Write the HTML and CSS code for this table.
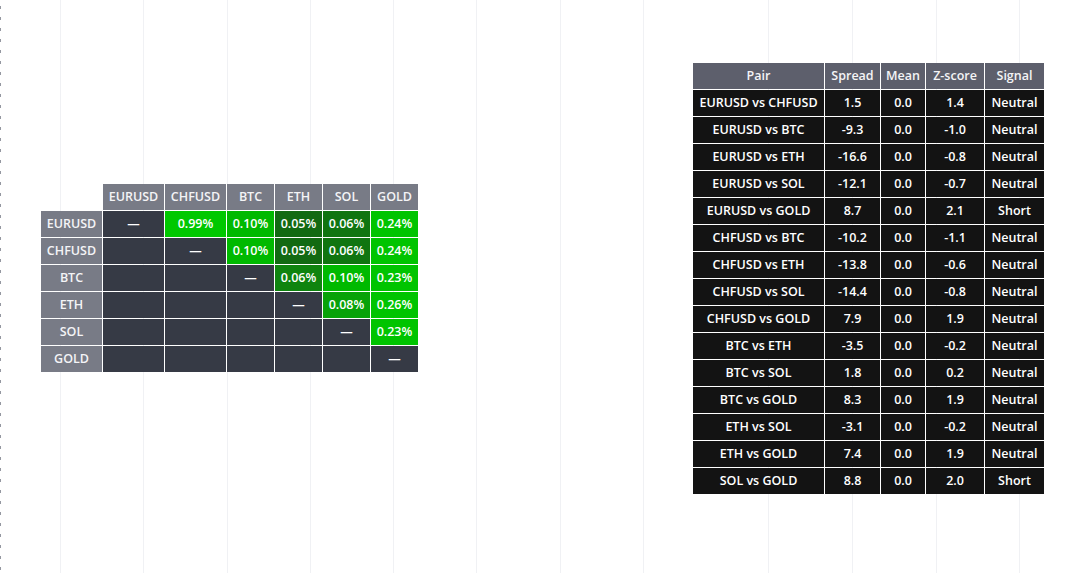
FILE: index.html
```html
<!DOCTYPE html>
<html>
<head>
<meta charset="utf-8">
<link rel="stylesheet" href="styles.css">
</head>
<body>
<div class="chart">
  <table class="corr">
    <colgroup>
      <col class="w61"><col class="w61"><col class="w61"><col class="w47"><col class="w47"><col class="w47"><col class="w47">
    </colgroup>
    <tr><td class="blank"></td><th>EURUSD</th><th>CHFUSD</th><th>BTC</th><th>ETH</th><th>SOL</th><th>GOLD</th></tr>
    <tr><th>EURUSD</th><td class="d">—</td><td class="g99">0.99%</td><td class="g10">0.10%</td><td class="g05">0.05%</td><td class="g06">0.06%</td><td class="g24">0.24%</td></tr>
    <tr><th>CHFUSD</th><td class="d"></td><td class="d">—</td><td class="g10">0.10%</td><td class="g05">0.05%</td><td class="g06">0.06%</td><td class="g24">0.24%</td></tr>
    <tr><th>BTC</th><td class="d"></td><td class="d"></td><td class="d">—</td><td class="g06b">0.06%</td><td class="g10">0.10%</td><td class="g24">0.23%</td></tr>
    <tr><th>ETH</th><td class="d"></td><td class="d"></td><td class="d"></td><td class="d">—</td><td class="g08">0.08%</td><td class="g24">0.26%</td></tr>
    <tr><th>SOL</th><td class="d"></td><td class="d"></td><td class="d"></td><td class="d"></td><td class="d">—</td><td class="g24">0.23%</td></tr>
    <tr><th>GOLD</th><td class="d"></td><td class="d"></td><td class="d"></td><td class="d"></td><td class="d"></td><td class="d">—</td></tr>
  </table>

  <table class="pairs">
    <colgroup>
      <col class="w131"><col class="w55"><col class="w44"><col class="w58"><col class="w59">
    </colgroup>
    <tr><th>Pair</th><th>Spread</th><th>Mean</th><th>Z-score</th><th>Signal</th></tr>
    <tr><td>EURUSD vs CHFUSD</td><td>1.5</td><td>0.0</td><td>1.4</td><td>Neutral</td></tr>
    <tr><td>EURUSD vs BTC</td><td>-9.3</td><td>0.0</td><td>-1.0</td><td>Neutral</td></tr>
    <tr><td>EURUSD vs ETH</td><td>-16.6</td><td>0.0</td><td>-0.8</td><td>Neutral</td></tr>
    <tr><td>EURUSD vs SOL</td><td>-12.1</td><td>0.0</td><td>-0.7</td><td>Neutral</td></tr>
    <tr><td>EURUSD vs GOLD</td><td>8.7</td><td>0.0</td><td>2.1</td><td>Short</td></tr>
    <tr><td>CHFUSD vs BTC</td><td>-10.2</td><td>0.0</td><td>-1.1</td><td>Neutral</td></tr>
    <tr><td>CHFUSD vs ETH</td><td>-13.8</td><td>0.0</td><td>-0.6</td><td>Neutral</td></tr>
    <tr><td>CHFUSD vs SOL</td><td>-14.4</td><td>0.0</td><td>-0.8</td><td>Neutral</td></tr>
    <tr><td>CHFUSD vs GOLD</td><td>7.9</td><td>0.0</td><td>1.9</td><td>Neutral</td></tr>
    <tr><td>BTC vs ETH</td><td>-3.5</td><td>0.0</td><td>-0.2</td><td>Neutral</td></tr>
    <tr><td>BTC vs SOL</td><td>1.8</td><td>0.0</td><td>0.2</td><td>Neutral</td></tr>
    <tr><td>BTC vs GOLD</td><td>8.3</td><td>0.0</td><td>1.9</td><td>Neutral</td></tr>
    <tr><td>ETH vs SOL</td><td>-3.1</td><td>0.0</td><td>-0.2</td><td>Neutral</td></tr>
    <tr><td>ETH vs GOLD</td><td>7.4</td><td>0.0</td><td>1.9</td><td>Neutral</td></tr>
    <tr><td>SOL vs GOLD</td><td>8.8</td><td>0.0</td><td>2.0</td><td>Short</td></tr>
  </table>
</div>
</body>
</html>
```
FILE: styles.css
```css
html, body {
  margin: 0;
  padding: 0;
  background: #ffffff;
}

.chart {
  width: 1087px;
  height: 573px;
  display: flex;
  align-items: flex-start;
  font-family: "Open Sans", "Noto Sans", sans-serif;
  font-size: 12.5px;
  font-weight: 600;
  color: #ffffff;
  background-color: #ffffff;
  background-image:
    repeating-linear-gradient(to bottom, transparent 0 6px, #9598a1 6px 9px, transparent 9px 11px),
    linear-gradient(#f0f1f4, #f0f1f4),
    linear-gradient(#f0f1f4, #f0f1f4),
    linear-gradient(#f0f1f4, #f0f1f4),
    linear-gradient(#f0f1f4, #f0f1f4),
    linear-gradient(#f0f1f4, #f0f1f4),
    linear-gradient(#f0f1f4, #f0f1f4),
    linear-gradient(#f0f1f4, #f0f1f4),
    linear-gradient(#f0f1f4, #f0f1f4),
    linear-gradient(#f0f1f4, #f0f1f4),
    linear-gradient(#f0f1f4, #f0f1f4),
    linear-gradient(#f0f1f4, #f0f1f4),
    linear-gradient(#f0f1f4, #f0f1f4);
  background-size: 1px 100%;
  background-repeat: no-repeat;
  background-position:
    0 0, 60px 0, 143px 0, 227px 0, 310px 0, 393px 0, 476px 0,
    560px 0, 643px 0, 768px 0, 852px 0, 936px 0, 1019px 0;
}

table {
  border-collapse: separate;
  border-spacing: 1px;
  table-layout: fixed;
}

th, td {
  padding: 0;
  height: 26px;
  line-height: 26px;
  text-align: center;
  white-space: nowrap;
  font-weight: 600;
  overflow: hidden;
}

.w61 { width: 61px; }
.w47 { width: 47px; }
.w131 { width: 131px; }
.w55 { width: 55px; }
.w44 { width: 44px; }
.w58 { width: 58px; }
.w59 { width: 59px; }

/* correlation matrix */
.corr {
  margin: 183px 0 0 40px;
}

.corr th {
  background: #787b86;
  color: #f4f4f6;
}

.corr .blank {
  background: transparent;
}

.corr .d { background: #363a45; }
.corr .g99 { background: #00c800; }
.corr .g24 { background: #00c400; }
.corr .g10 { background: #00b900; }
.corr .g08 { background: #08a208; }
.corr .g06b { background: #0f840f; }
.corr .g06 { background: #107510; }
.corr .g05 { background: #126a12; }

/* pair spreads */
.pairs {
  margin: 62px 42px 0 auto;
}

.pairs th {
  background: #5d5f6c;
  color: #f4f4f6;
}

.pairs td {
  background: #131313;
}
```
